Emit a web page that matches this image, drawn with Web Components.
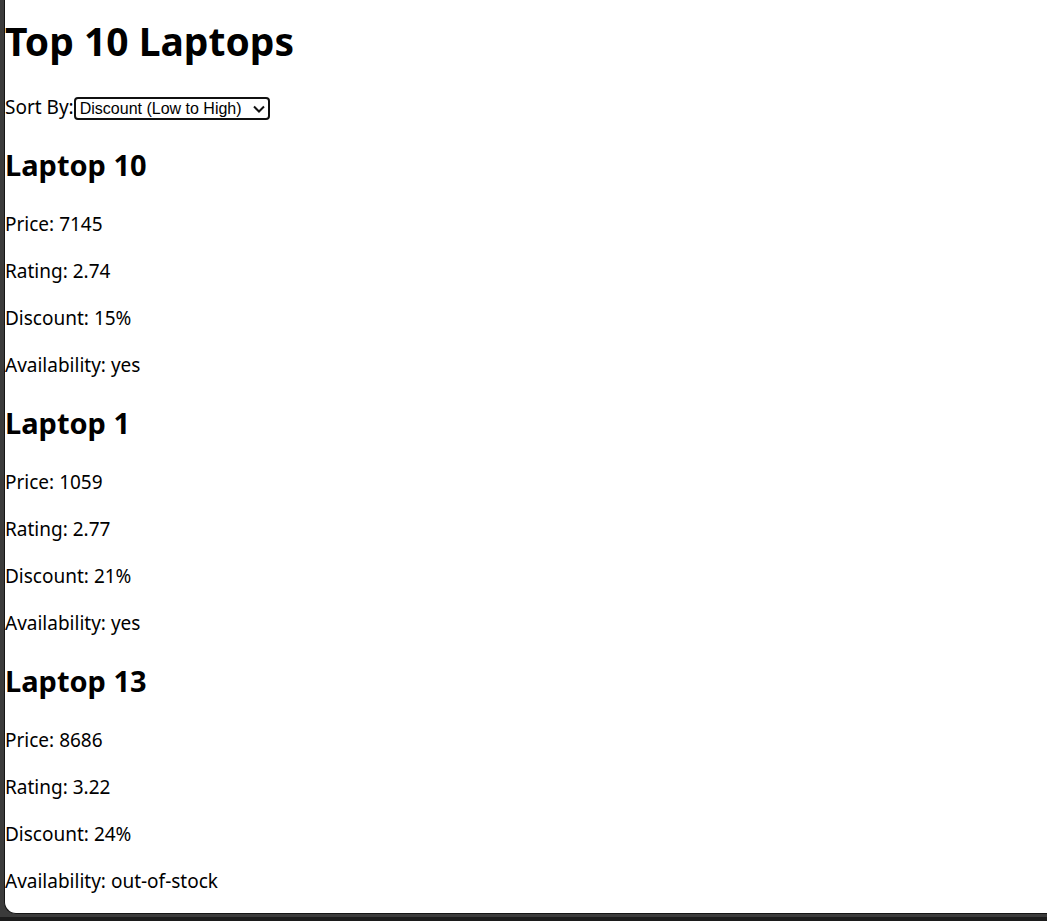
<!DOCTYPE html>
<html lang="en">
<head>
<meta charset="utf-8">
<title>Top 10 Laptops</title>
<style>
  html, body { margin: 0; background: #3b3b3b; }
  body { font: 19px/27px "Segoe UI", "Noto Sans", sans-serif; color: #000; }
</style>
</head>
<body>
<page-frame>
  <page-title>Top 10 Laptops</page-title>
  <sort-picker></sort-picker>
  <laptop-item price="7145" rating="2.74" discount="15%" availability="yes">Laptop 10</laptop-item>
  <laptop-item price="1059" rating="2.77" discount="21%" availability="yes">Laptop 1</laptop-item>
  <laptop-item price="8686" rating="3.22" discount="24%" availability="out-of-stock">Laptop 13</laptop-item>
</page-frame>
<script>
  const define = (name, html, setup) => customElements.define(name, class extends HTMLElement {
    constructor() {
      super();
      this.attachShadow({ mode: "open" }).innerHTML = html;
    }
    connectedCallback() { if (setup) setup(this); }
  });

  define("page-frame", `
    <style>
      :host { display: flex; flex-direction: column; min-height: 100vh; box-sizing: border-box;
              padding-left: 4px; background: #3b3b3b; border-bottom: 4px solid #1c1c1c; }
      main { flex: 1; background: #fff; border: solid #151515; border-width: 0 0 1px 1px;
             border-bottom-left-radius: 12px; margin-bottom: 3px; padding: 14px 0 16px; }
    </style>
    <main><slot></slot></main>`);

  define("page-title", `
    <style>
      :host { display: block; }
      h1 { margin: 0 0 27px; font-size: 39px; line-height: 53px; }
    </style>
    <h1><slot></slot></h1>`);

  define("sort-picker", `
    <style>
      :host { display: flex; align-items: center; height: 27px; margin-bottom: 24px; }
      .box { display: grid; align-items: center; }
      select, svg { grid-area: 1 / 1; }
      select { appearance: none; box-sizing: border-box; width: 196px; height: 23px; margin: 2px 0 0;
               padding: 0 20px 0 4px; border: 2px solid #101010; border-radius: 4px;
               background: #fff; color: #000; font: 16px/19px "Liberation Sans", Arial, sans-serif; outline: 0; }
      svg { justify-self: end; margin: 2px 4px 0 0; pointer-events: none; }
    </style>
    <label for="sort">Sort By:</label>
    <div class="box">
      <select id="sort">
        <option>Discount (Low to High)</option>
        <option>Discount (High to Low)</option>
        <option>Price (Low to High)</option>
        <option>Price (High to Low)</option>
        <option>Rating (Low to High)</option>
        <option>Rating (High to Low)</option>
      </select>
      <svg width="14" height="10" viewBox="0 0 14 10" fill="none" stroke="#101010" stroke-width="2" aria-hidden="true"><path d="M2 2.5 7 7.5 12 2.5"/></svg>
    </div>`);

  define("laptop-item", `
    <style>
      :host { display: block; }
      :host(:not(:last-child)) { margin-bottom: 24px; }
      h2 { margin: 0 0 26px; font-size: 29px; line-height: 40px; }
      p { margin: 0 0 20px; }
      p:last-child { margin: 0; }
    </style>
    <h2><slot></slot></h2>
    <p>Price: <span data-field="price"></span></p>
    <p>Rating: <span data-field="rating"></span></p>
    <p>Discount: <span data-field="discount"></span></p>
    <p>Availability: <span data-field="availability"></span></p>`,
    host => host.shadowRoot.querySelectorAll("[data-field]").forEach(span => {
      span.textContent = host.getAttribute(span.dataset.field);
    }));
</script>
</body>
</html>
